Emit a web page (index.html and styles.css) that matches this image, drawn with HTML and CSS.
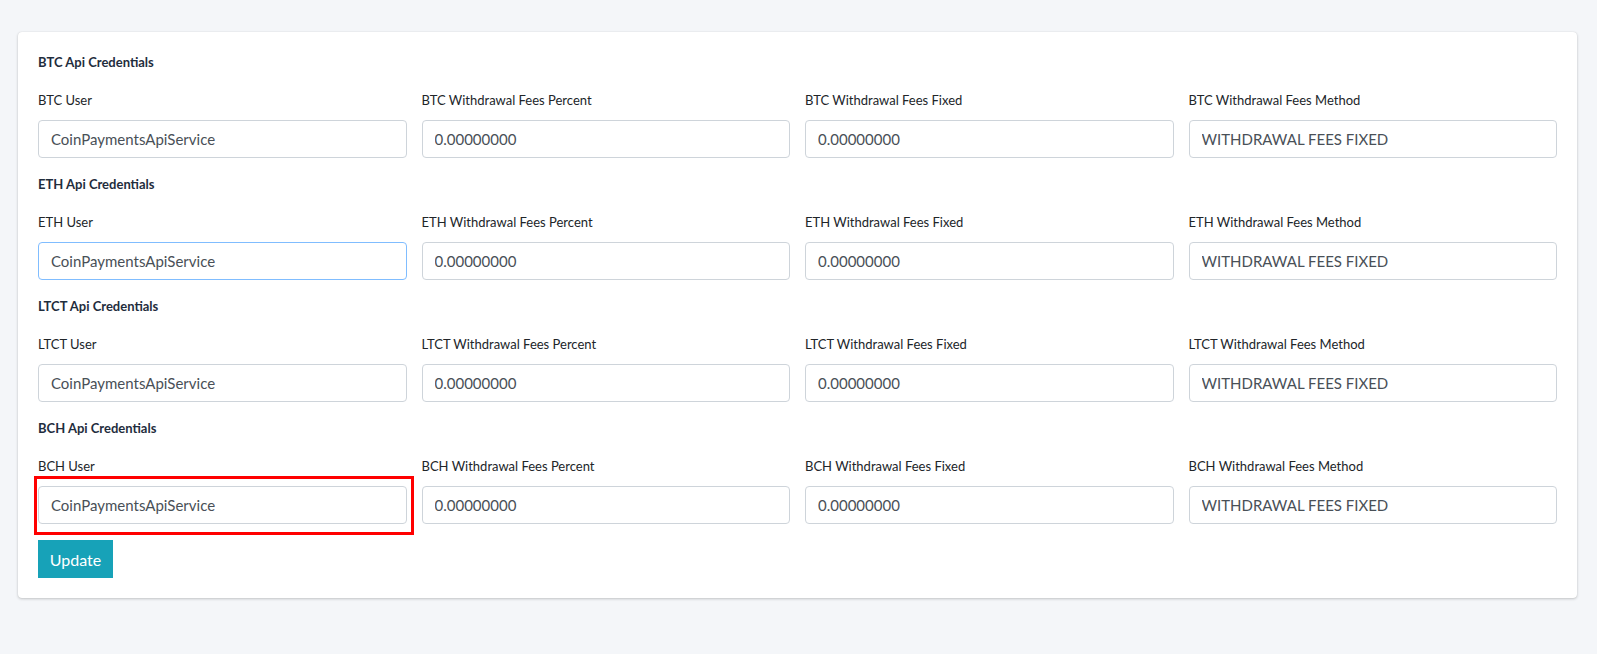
FILE: index.html
```html
<!DOCTYPE html>
<html lang="en">
<head>
<meta charset="utf-8">
<title>Api Credentials</title>
<link rel="stylesheet" href="styles.css">
</head>
<body>
<div class="page">
  <div class="card">
    <form class="card-body">
      <section class="block">
        <h6 class="block-title">BTC Api Credentials</h6>
        <div class="row">
          <div class="group"><label class="lbl">BTC User</label><input class="ctl" type="text" value="CoinPaymentsApiService"></div>
          <div class="group"><label class="lbl">BTC Withdrawal Fees Percent</label><input class="ctl" type="text" value="0.00000000"></div>
          <div class="group"><label class="lbl">BTC Withdrawal Fees Fixed</label><input class="ctl" type="text" value="0.00000000"></div>
          <div class="group"><label class="lbl">BTC Withdrawal Fees Method</label><input class="ctl" type="text" value="WITHDRAWAL FEES FIXED"></div>
        </div>
      </section>
      <section class="block">
        <h6 class="block-title">ETH Api Credentials</h6>
        <div class="row">
          <div class="group"><label class="lbl">ETH User</label><input class="ctl ctl-focus" type="text" value="CoinPaymentsApiService"></div>
          <div class="group"><label class="lbl">ETH Withdrawal Fees Percent</label><input class="ctl" type="text" value="0.00000000"></div>
          <div class="group"><label class="lbl">ETH Withdrawal Fees Fixed</label><input class="ctl" type="text" value="0.00000000"></div>
          <div class="group"><label class="lbl">ETH Withdrawal Fees Method</label><input class="ctl" type="text" value="WITHDRAWAL FEES FIXED"></div>
        </div>
      </section>
      <section class="block">
        <h6 class="block-title">LTCT Api Credentials</h6>
        <div class="row">
          <div class="group"><label class="lbl">LTCT User</label><input class="ctl" type="text" value="CoinPaymentsApiService"></div>
          <div class="group"><label class="lbl">LTCT Withdrawal Fees Percent</label><input class="ctl" type="text" value="0.00000000"></div>
          <div class="group"><label class="lbl">LTCT Withdrawal Fees Fixed</label><input class="ctl" type="text" value="0.00000000"></div>
          <div class="group"><label class="lbl">LTCT Withdrawal Fees Method</label><input class="ctl" type="text" value="WITHDRAWAL FEES FIXED"></div>
        </div>
      </section>
      <section class="block">
        <h6 class="block-title">BCH Api Credentials</h6>
        <div class="row">
          <div class="group"><label class="lbl">BCH User</label><div class="mark-wrap"><input class="ctl" type="text" value="CoinPaymentsApiService"><span class="mark"></span></div></div>
          <div class="group"><label class="lbl">BCH Withdrawal Fees Percent</label><input class="ctl" type="text" value="0.00000000"></div>
          <div class="group"><label class="lbl">BCH Withdrawal Fees Fixed</label><input class="ctl" type="text" value="0.00000000"></div>
          <div class="group"><label class="lbl">BCH Withdrawal Fees Method</label><input class="ctl" type="text" value="WITHDRAWAL FEES FIXED"></div>
        </div>
      </section>
      <button class="btn-update" type="button">Update</button>
    </form>
  </div>
</div>
</body>
</html>
```
FILE: styles.css
```css
* { box-sizing: border-box; }
html, body {
  margin: 0;
  padding: 0;
  background: #f4f6f9;
  font-family: "Lato", "Liberation Sans", sans-serif;
  color: #212529;
}
.page {
  padding: 32px 20px 56px 18px;
}
.card {
  background: #fff;
  border-radius: 4px;
  box-shadow: 0 0 1px rgba(0,0,0,.125), 0 1px 3px rgba(0,0,0,.2);
}
.card-body {
  padding: 20px;
  margin: 0;
}
.block-title {
  margin: 0 0 18px;
  font-size: 13px;
  line-height: 20px;
  font-weight: 700;
  color: #1f2d3d;
}
.row {
  display: grid;
  grid-template-columns: repeat(4, 1fr);
  column-gap: 15px;
}
.group {
  margin-bottom: 16px;
  display: flex;
  flex-direction: column;
}
.lbl {
  display: block;
  font-size: 13px;
  line-height: 20px;
  margin-bottom: 10px;
  color: #212529;
  font-weight: 400;
}
.ctl {
  display: block;
  width: 100%;
  height: 38px;
  padding: 6px 12px;
  font-family: inherit;
  font-size: 15px;
  line-height: 24px;
  color: #495057;
  background: #fff;
  border: 1px solid #ced4da;
  border-radius: 4px;
  outline: none;
}
.ctl-focus {
  border-color: #80bdff;
}
.mark-wrap {
  position: relative;
}
.mark {
  position: absolute;
  top: -10px;
  left: -4px;
  right: -7px;
  bottom: -11px;
  border: 3px solid #ff0000;
  pointer-events: none;
}
.btn-update {
  display: block;
  height: 38px;
  width: 75px;
  padding: 0;
  font-family: inherit;
  font-size: 16px;
  color: #fff;
  background: #17a2b8;
  border: 1px solid #17a2b8;
  border-radius: 0;
}
```
